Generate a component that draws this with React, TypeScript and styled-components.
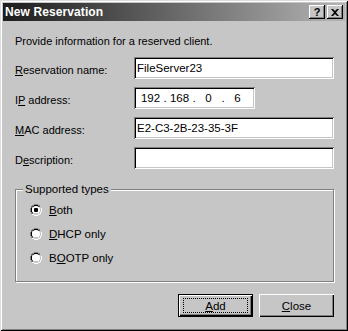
import React from 'react';
import styled, {createGlobalStyle} from "styled-components";

const FACE = '#c6c6c6';

const GlobalStyle = createGlobalStyle`
  html, body {
    margin: 0;
    padding: 0;
    background: ${FACE};
  }
  body {
    font-family: "Liberation Sans", Arial, sans-serif;
    font-size: 11px;
    color: #000;
  }
`

const RadioIcon: React.FC<{checked?: boolean}> = ({checked}) => (
    <svg width="12" height="12" viewBox="0 0 12 12">
        <path d="M4 0.5 H8 M2 1.5 H4 M8 1.5 H10 M1.5 2 V4 M0.5 4 V8 M1.5 8 V10" stroke="#808080" fill="none"/>
        <path d="M4 1.5 H8 M2.5 2.5 H9.5 M2 2.5 V3.5 M1.5 4 V8 M2.5 8 V9.5" stroke="#000" fill="none"/>
        <circle cx="6" cy="6" r="4" fill="#fff"/>
        <path d="M11.5 4 V8 M10.5 8 V10 M10 10.5 H8 M8 11.5 H4 M4 10.5 H2" stroke="#fff" fill="none"/>
        <path d="M10.5 3.5 V8 M9.5 8 V9.5 M8 9.5 H4 M4 9.5 H3" stroke={FACE} fill="none"/>
        {checked && <rect x="4" y="4" width="4" height="4" rx="1" fill="#000"/>}
    </svg>
);

const App: React.FC = () => {
    return (
        <Window>
            <GlobalStyle/>
            <TitleBar>
                <Title>New Reservation</Title>
                <CaptionButtons>
                    <CaptionButton>?</CaptionButton>
                    <CaptionButton>
                        <svg width="8" height="7" viewBox="0 0 8 7">
                            <path d="M0 0h2l2 2 2-2h2L5 3.5 8 7H6L4 5 2 7H0l3-3.5z" fill="#000"/>
                        </svg>
                    </CaptionButton>
                </CaptionButtons>
            </TitleBar>
            <Body>
                <Intro>Provide information for a reserved client.</Intro>
                <Form>
                    <Label><u>R</u>eservation name:</Label>
                    <TextBox>FileServer23</TextBox>
                    <Label>I<u>P</u> address:</Label>
                    <IpBox>
                        <IpPart>192</IpPart><Dot>.</Dot>
                        <IpPart>168</IpPart><Dot>.</Dot>
                        <IpPart>0</IpPart><Dot>.</Dot>
                        <IpPart>6</IpPart>
                    </IpBox>
                    <Label><u>M</u>AC address:</Label>
                    <TextBox>E2-C3-2B-23-35-3F</TextBox>
                    <Label>D<u>e</u>scription:</Label>
                    <TextBox/>
                </Form>
                <GroupBox>
                    <Legend>Supported types</Legend>
                    <Radio><RadioIcon checked/><span><u>B</u>oth</span></Radio>
                    <Radio><RadioIcon/><span><u>D</u>HCP only</span></Radio>
                    <Radio><RadioIcon/><span>B<u>O</u>OTP only</span></Radio>
                </GroupBox>
                <ButtonRow>
                    <Button $default><Focus><u>A</u>dd</Focus></Button>
                    <Button><u>C</u>lose</Button>
                </ButtonRow>
            </Body>
        </Window>
    );
}

export default App;

const Window = styled.div`
  width: 348px;
  height: 331px;
  box-sizing: border-box;
  padding: 3px;
  background: ${FACE};
  box-shadow: inset 1px 1px 0 #dcdcdc, inset -1px -1px 0 #000,
  inset 2px 2px 0 #fff, inset -2px -2px 0 #808080;
  display: flex;
  flex-direction: column;
`

const TitleBar = styled.div`
  height: 18px;
  display: flex;
  align-items: center;
  justify-content: space-between;
  padding: 0 2px 0 2px;
  background: linear-gradient(to right, #1c1c1c, #b4b4b4);
`

const Title = styled.div`
  color: #fff;
  font-weight: bold;
  font-size: 12px;
  padding-left: 0;
  letter-spacing: 0.1px;
`

const CaptionButtons = styled.div`
  display: flex;
  gap: 2px;
`

const CaptionButton = styled.div`
  width: 16px;
  height: 14px;
  box-sizing: border-box;
  background: ${FACE};
  box-shadow: inset -1px -1px 0 #000, inset 1px 1px 0 #fff,
  inset -2px -2px 0 #808080;
  display: flex;
  align-items: center;
  justify-content: center;
  font-weight: bold;
  font-size: 11px;
  line-height: 14px;
`

const Body = styled.div`
  flex: 1;
  padding: 13px 11px 0 12px;
  display: flex;
  flex-direction: column;
`

const Intro = styled.div`
  height: 14px;
  line-height: 14px;
`

const Form = styled.div`
  display: grid;
  grid-template-columns: 119px 200px;
  grid-auto-rows: 22px;
  row-gap: 8px;
  margin-top: 9px;
  align-items: center;
`

const Label = styled.div`
  padding-top: 3px;
`

const Sunken = styled.div`
  height: 22px;
  box-sizing: border-box;
  background: #fff;
  box-shadow: inset 1px 1px 0 #808080, inset -1px -1px 0 #fff,
  inset 2px 2px 0 #000, inset -2px -2px 0 ${FACE};
  display: flex;
  align-items: center;
`

const TextBox = styled(Sunken)`
  padding-left: 3px;
  font-size: 11.5px;
`

const IpBox = styled(Sunken)`
  width: 121px;
  padding-left: 5px;
  font-size: 11.5px;
`

const IpPart = styled.span`
  width: 23px;
  text-align: center;
`

const Dot = styled.span`
  width: 6px;
  text-align: center;
`

const GroupBox = styled.div`
  position: relative;
  margin-top: 20px;
  height: 93px;
  box-sizing: border-box;
  border: 1px solid #808080;
  box-shadow: inset 1px 1px 0 #fff, 1px 1px 0 #fff;
  padding: 13px 0 0 14px;
  display: flex;
  flex-direction: column;
  gap: 11px;
`

const Legend = styled.div`
  position: absolute;
  top: -8px;
  left: 7px;
  padding: 0 2px;
  background: ${FACE};
  line-height: 14px;
  font-size: 11.5px;
`

const Radio = styled.div`
  display: flex;
  align-items: center;
  gap: 7px;
  height: 13px;
  font-size: 11.5px;
`

const ButtonRow = styled.div`
  display: flex;
  justify-content: flex-end;
  gap: 6px;
  margin-top: 12px;
  padding-right: 0;
`

const Button = styled.div<{$default?: boolean}>`
  width: 75px;
  height: 23px;
  box-sizing: border-box;
  background: ${FACE};
  display: flex;
  align-items: center;
  justify-content: center;
  font-size: 11.5px;
  box-shadow: ${p => p.$default
          ? `inset 0 0 0 1px #000, inset 2px 2px 0 #fff, inset -2px -2px 0 #000, inset -3px -3px 0 #808080`
          : `inset 1px 1px 0 #fff, inset -1px -1px 0 #000, inset -2px -2px 0 #808080`};
`

const Focus = styled.div`
  width: 65px;
  height: 15px;
  box-sizing: border-box;
  border: 1px dotted #000;
  display: flex;
  align-items: center;
  justify-content: center;
`
